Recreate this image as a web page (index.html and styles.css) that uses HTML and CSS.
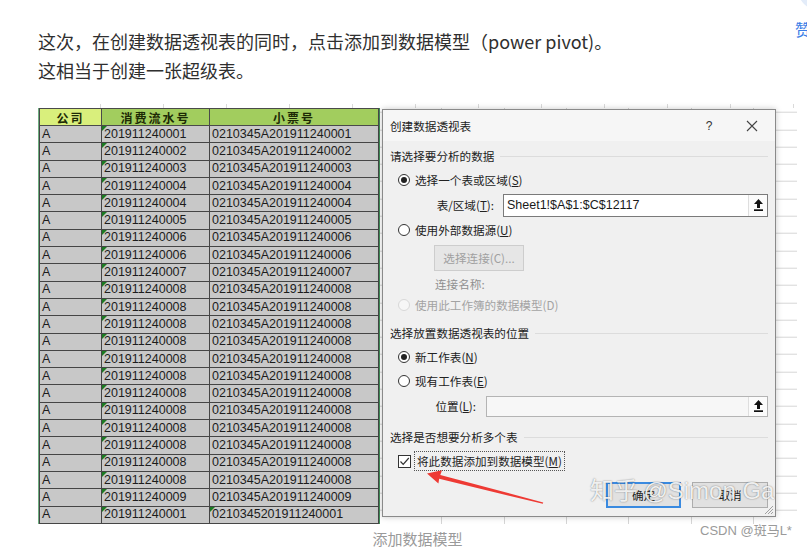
FILE: index.html
```html
<!DOCTYPE html>
<html lang="zh-CN">
<head>
<meta charset="utf-8">
<title>添加数据模型</title>
<link rel="stylesheet" href="styles.css">
</head>
<body>
<div class="side-clip"><div class="side-circle"></div><span class="side-zan">赞</span></div>
<main class="article">
  <p class="para">这次，在创建数据透视表的同时，点击添加到数据模型（power pivot)。<br>这相当于创建一张超级表。</p>
  <figure class="fig">
    <div class="shot">
      <div class="sheet">
        <div class="xl-wrap">
          <table class="xl">
            <colgroup><col class="c-a"><col class="c-b"><col class="c-c"></colgroup>
            <tr class="hd"><th class="h1">公司</th><th class="h2">消费流水号</th><th class="h2">小票号</th></tr>
            <tr><td>A</td><td class="tx">201911240001</td><td>0210345A201911240001</td></tr>
            <tr><td>A</td><td class="tx">201911240002</td><td>0210345A201911240002</td></tr>
            <tr><td>A</td><td class="tx">201911240003</td><td>0210345A201911240003</td></tr>
            <tr><td>A</td><td class="tx">201911240004</td><td>0210345A201911240004</td></tr>
            <tr><td>A</td><td class="tx">201911240004</td><td>0210345A201911240004</td></tr>
            <tr><td>A</td><td class="tx">201911240005</td><td>0210345A201911240005</td></tr>
            <tr><td>A</td><td class="tx">201911240006</td><td>0210345A201911240006</td></tr>
            <tr><td>A</td><td class="tx">201911240006</td><td>0210345A201911240006</td></tr>
            <tr><td>A</td><td class="tx">201911240007</td><td>0210345A201911240007</td></tr>
            <tr><td>A</td><td class="tx">201911240008</td><td>0210345A201911240008</td></tr>
            <tr><td>A</td><td class="tx">201911240008</td><td>0210345A201911240008</td></tr>
            <tr><td>A</td><td class="tx">201911240008</td><td>0210345A201911240008</td></tr>
            <tr><td>A</td><td class="tx">201911240008</td><td>0210345A201911240008</td></tr>
            <tr><td>A</td><td class="tx">201911240008</td><td>0210345A201911240008</td></tr>
            <tr><td>A</td><td class="tx">201911240008</td><td>0210345A201911240008</td></tr>
            <tr><td>A</td><td class="tx">201911240008</td><td>0210345A201911240008</td></tr>
            <tr><td>A</td><td class="tx">201911240008</td><td>0210345A201911240008</td></tr>
            <tr><td>A</td><td class="tx">201911240008</td><td>0210345A201911240008</td></tr>
            <tr><td>A</td><td class="tx">201911240008</td><td>0210345A201911240008</td></tr>
            <tr><td>A</td><td class="tx">201911240008</td><td>0210345A201911240008</td></tr>
            <tr><td>A</td><td class="tx">201911240008</td><td>0210345A201911240008</td></tr>
            <tr><td>A</td><td class="tx">201911240009</td><td>0210345A201911240009</td></tr>
            <tr><td>A</td><td class="tx">201911240001</td><td class="tx">0210345201911240001</td></tr>
          </table>
        </div>
        <div class="grid"></div>
      </div>

      <div class="dialog">
        <div class="dlg-title">
          <span class="dlg-name">创建数据透视表</span>
          <span class="dlg-help">?</span>
          <svg class="dlg-close" width="12" height="12" viewBox="0 0 12 12"><path d="M1 1L11 11M11 1L1 11" stroke="#444" stroke-width="1.1" fill="none"/></svg>
        </div>
        <div class="dlg-body">
          <div class="sec sec1"><span>请选择要分析的数据</span></div>
          <div class="opt opt-r1"><span class="radio on"></span><span>选择一个表或区域(<u>S</u>)</span></div>
          <div class="field field-tbl">
            <span class="flabel flabel-tbl">表/区域(<u>T</u>):</span>
            <div class="inp inp-tbl"><span class="inp-val">Sheet1!$A$1:$C$12117</span><span class="inp-pick"><svg width="9" height="12" viewBox="0 0 9 12"><polygon points="4.5,0 9,5 6,5 6,9 3,9 3,5 0,5" fill="#111"/><rect x="0" y="10.3" width="9" height="1.7" fill="#111"/></svg></span></div>
          </div>
          <div class="opt opt-r2"><span class="radio"></span><span>使用外部数据源(<u>U</u>)</span></div>
          <div class="conn-row"><span class="btn-dis">选择连接(C)...</span></div>
          <div class="conn-name">连接名称:</div>
          <div class="opt opt-r3 dis"><span class="radio off"></span><span>使用此工作簿的数据模型(D)</span></div>
          <div class="sec sec2"><span>选择放置数据透视表的位置</span></div>
          <div class="opt opt-r4"><span class="radio on"></span><span>新工作表(<u>N</u>)</span></div>
          <div class="opt opt-r5"><span class="radio"></span><span>现有工作表(<u>E</u>)</span></div>
          <div class="field field-loc">
            <span class="flabel flabel-loc">位置(<u>L</u>):</span>
            <div class="inp inp-loc"><span class="inp-val"></span><span class="inp-pick"><svg width="9" height="12" viewBox="0 0 9 12"><polygon points="4.5,0 9,5 6,5 6,9 3,9 3,5 0,5" fill="#111"/><rect x="0" y="10.3" width="9" height="1.7" fill="#111"/></svg></span></div>
          </div>
          <div class="sec sec3"><span>选择是否想要分析多个表</span></div>
          <div class="chk-row">
            <span class="chk"><svg width="11" height="11" viewBox="0 0 11 11"><polyline points="1.5,5.5 4.2,8.3 9.8,2" fill="none" stroke="#333" stroke-width="1.2"/></svg></span>
            <span class="chk-label">将此数据添加到数据模型(<u>M</u>)</span>
          </div>
          <div class="btn-row">
            <span class="btn btn-ok">确定</span>
            <span class="btn">取消</span>
          </div>
        </div>
        <svg class="grip" width="11" height="11" viewBox="0 0 11 11"><path d="M10 2L2 10M10 5L5 10M10 8L8 10" stroke="#a0a0a0" stroke-width="1" fill="none"/></svg>
        <div class="zhihu">知乎 <span class="zh-lat">@Simon Gan</span></div>
      </div>

      <svg class="arrow" width="759" height="424" viewBox="0 0 759 424"><polygon points="389,369.5 404,366.3 402.3,370.9 505.2,398.4 504.8,399.8 401.2,374.8 400.4,379.6" fill="#ee3a34"/></svg>
      <span class="csdn">CSDN @斑马L*</span>
    </div>
    <figcaption class="cap">添加数据模型</figcaption>
  </figure>
</main>
</body>
</html>
```
FILE: styles.css
```css
html, body {
  margin: 0;
  padding: 0;
  background: #fff;
  overflow: hidden;
}
body {
  width: 807px;
  height: 547px;
  position: relative;
  font-family: "Noto Sans CJK SC", "Noto Sans", sans-serif;
}

/* right sidebar fragment */
.side-clip {
  position: absolute;
  top: 0;
  right: 0;
  width: 14px;
  height: 45px;
  overflow: hidden;
}
.side-circle {
  position: absolute;
  left: 3.5px;
  top: -37.5px;
  width: 48px;
  height: 48px;
  border-radius: 50%;
  background: #e3ecf9;
}
.side-zan {
  position: absolute;
  left: 2px;
  top: 19px;
  font-size: 16px;
  line-height: 20px;
  color: #3b7de6;
}

.article {
  width: 759px;
  padding: 27px 0 0 38px;
}
.para {
  margin: 0;
  font-size: 18px;
  line-height: 29px;
  color: #2f2f2f;
}

.fig {
  margin: 19px 0 0 0;
  width: 759px;
}
.shot {
  position: relative;
  height: 424px;
}
.sheet {
  display: flex;
  padding-top: 4px;
  background:
    repeating-linear-gradient(to right, transparent 0 62px, #dadada 62px 63px) 0 0 / 100% 4px no-repeat;
}

.xl-wrap {
  border-left: 1px solid #6fae80;
  border-right: 2px solid #3f8d58;
  width: 339px;
}
.xl {
  border-collapse: collapse;
  table-layout: fixed;
  width: 339px;
  font-family: "Liberation Sans", Arial, sans-serif;
  font-size: 12.5px;
  color: #1c1c1c;
}
.c-a { width: 62px; }
.c-b { width: 108px; }
.c-c { width: 169px; }
.xl tr { height: 17.3px; }
.xl tr.hd { height: 17px; }
.xl th {
  border: 1px solid #4a4a4a;
  padding: 0;
  font-family: "Noto Sans CJK SC", sans-serif;
  font-size: 12px;
  font-weight: bold;
  letter-spacing: 2px;
  line-height: 15px;
  color: #1d2a05;
  text-align: center;
}
.xl th.h1 { background: #d9ef7c; }
.xl th.h2 { background: #a2cd5e; }
.xl td {
  border: 1px solid #454545;
  background: #c8c8c8;
  padding: 0 0 0 2px;
  line-height: 15px;
  white-space: nowrap;
  overflow: hidden;
  position: relative;
}
.xl td.tx::before {
  content: "";
  position: absolute;
  left: 0;
  top: 0;
  border-top: 5px solid #1c7a22;
  border-right: 5px solid transparent;
}

.grid {
  flex: 1;
  background:
    repeating-linear-gradient(to bottom, transparent 0 16.3px, #d6d6d6 16.3px 17.3px) 0 -12.3px,
    repeating-linear-gradient(to right, transparent 0 61.3px, #d6d6d6 61.3px 62.3px) 0 0;
}

/* dialog */
.dialog {
  position: absolute;
  left: 344px;
  top: 5px;
  width: 394px;
  height: 408px;
  box-sizing: border-box;
  border: 1px solid #8a8a8a;
  background: #f0f0f0;
  box-shadow: 0 0 6px rgba(0, 0, 0, 0.22);
  overflow: hidden;
  font-size: 11.6px;
  color: #222;
}
.dlg-title {
  height: 31px;
  display: flex;
  align-items: center;
  padding-left: 7px;
  background: #f6f6f6;
}
.dlg-name { flex: 1; }
.dlg-help {
  width: 20px;
  text-align: center;
  font-family: "Liberation Sans", sans-serif;
  font-size: 12px;
  color: #333;
  margin-right: 27px;
}
.dlg-close { margin-right: 17px; }

.dlg-body {
  padding: 0 7px;
}
.sec {
  display: flex;
  align-items: center;
  color: #222;
}
.sec::after {
  content: "";
  flex: 1;
  height: 1px;
  background: #dcdcdc;
  margin-left: 6px;
}
.sec1 { height: 30px; }
.sec2 { height: 28px; }
.sec3 { height: 24px; margin-top: 8px; }

.opt {
  display: flex;
  align-items: center;
  padding-left: 8px;
}
.opt-r1 { height: 18px; }
.opt-r2 { height: 18px; }
.opt-r3 { height: 28px; }
.opt-r4 { height: 20px; }
.opt-r5 { height: 28px; }
.opt.dis { color: #a3a3a3; }
.radio {
  width: 12px;
  height: 12px;
  box-sizing: border-box;
  border: 1px solid #333;
  border-radius: 50%;
  background: #fff;
  margin-right: 5px;
  position: relative;
  flex: none;
}
.radio.on::after {
  content: "";
  position: absolute;
  left: 2px;
  top: 2px;
  width: 6px;
  height: 6px;
  border-radius: 50%;
  background: #222;
}
.radio.off {
  border-color: #d8d8d8;
  background: #f6f6f6;
}
u { text-decoration: underline; text-underline-offset: 1px; }

.field {
  display: flex;
  align-items: center;
}
.field-tbl { height: 32px; }
.field-loc { height: 22px; }
.flabel { text-align: right; flex: none; }
.flabel-tbl { width: 104px; margin-right: 9px; }
.flabel-loc { width: 86px; margin-right: 10px; }
.inp {
  display: flex;
  box-sizing: border-box;
  border: 1px solid #7a7a7a;
  background: #fff;
}
.inp-tbl { width: 267px; height: 23px; }
.inp-loc { width: 284px; height: 21px; border-color: #b4b4b4; background: #f7f7f7; }
.inp-val {
  flex: 1;
  padding-left: 3px;
  font-family: "Liberation Sans", Arial, sans-serif;
  font-size: 12.5px;
  line-height: 21px;
  color: #1a1a1a;
}
.inp-loc .inp-val { line-height: 19px; }
.inp-pick {
  width: 18px;
  border-left: 1px solid #dedede;
  background: #fbfbfb;
  display: flex;
  align-items: center;
  justify-content: center;
}

.conn-row {
  padding: 6px 0 6px 44px;
}
.btn-dis {
  display: flex;
  align-items: center;
  justify-content: center;
  width: 90px;
  height: 26px;
  box-sizing: border-box;
  border: 1px solid #cdcdcd;
  background: #e6e6e6;
  color: #a0a0a0;
}
.conn-name {
  height: 14px;
  line-height: 14px;
  padding-left: 45px;
  color: #8f8f8f;
}

.chk-row {
  height: 24px;
  display: flex;
  align-items: center;
  padding-left: 8px;
}
.chk {
  width: 13px;
  height: 13px;
  box-sizing: border-box;
  border: 1px solid #333;
  background: #fff;
  display: flex;
  align-items: center;
  justify-content: center;
  flex: none;
}
.chk-label {
  margin-left: 3px;
  padding: 1px 2px;
  border: 1px dotted #555;
  line-height: 16px;
}

.btn-row {
  display: flex;
  justify-content: flex-end;
  gap: 11px;
  margin-top: 9px;
}
.btn {
  width: 76px;
  height: 26px;
  box-sizing: border-box;
  border: 1px solid #adadad;
  background: #e1e1e1;
  display: flex;
  align-items: center;
  justify-content: center;
  color: #222;
}
.btn-ok {
  width: 75px;
  border: 2px solid #3a8ae0;
}

.grip {
  position: absolute;
  right: 1px;
  bottom: 1px;
}
.zhihu {
  position: absolute;
  left: 207px;
  top: 364px;
  font-size: 24px;
  line-height: 30px;
  white-space: nowrap;
  color: rgba(255, 255, 255, 0.9);
  text-shadow: 0 0 1.5px rgba(0, 0, 0, 0.55);
}
.zh-lat { font-family: "Liberation Sans", Arial, sans-serif; }

.arrow {
  position: absolute;
  left: 0;
  top: 0;
  pointer-events: none;
}
.csdn {
  position: absolute;
  left: 662px;
  top: 419px;
  font-family: "Liberation Sans", "Noto Sans CJK SC", sans-serif;
  font-size: 13px;
  line-height: 16px;
  color: #9a9a9a;
  white-space: nowrap;
}

.cap {
  margin-top: 1px;
  text-align: center;
  font-size: 15px;
  line-height: 20px;
  color: #9a9a9a;
}
```
